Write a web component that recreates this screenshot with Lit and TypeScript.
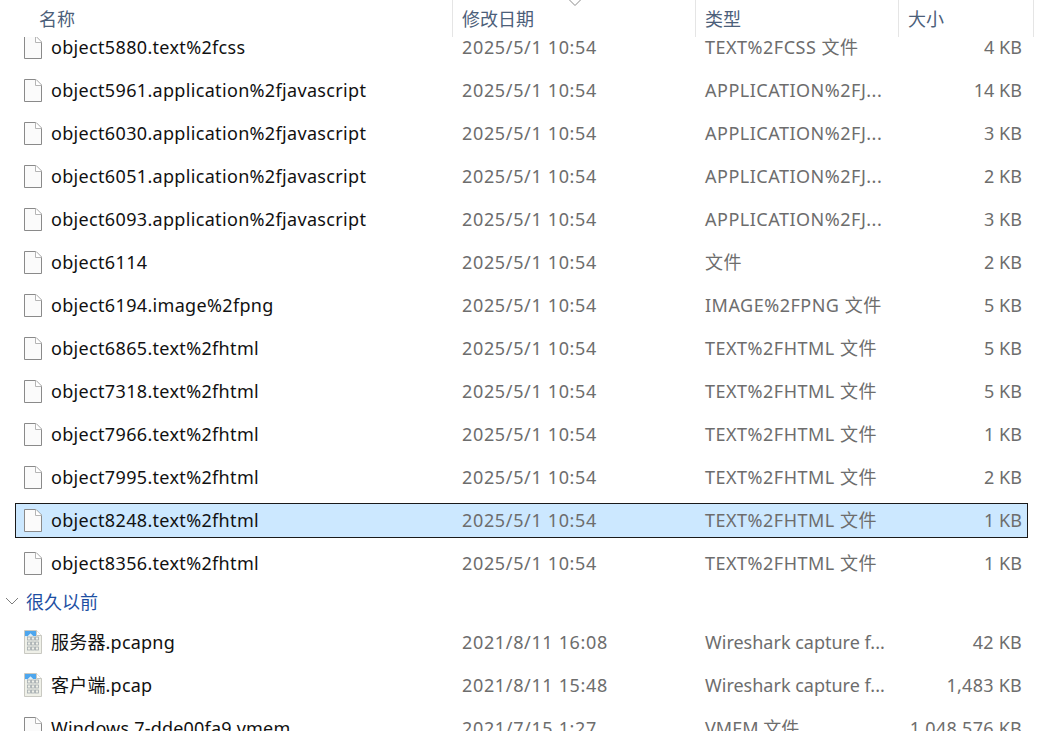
import { LitElement, html, css, svg } from "lit";
import { customElement } from "lit/decorators.js";

type Row = { name: string; date: string; type: string; size: string; kind?: "file" | "pcap"; sel?: boolean; old?: boolean };
const D = "2025/5/1 10:54";
const H = "TEXT%2FHTML 文件";
const A = "APPLICATION%2FJ...";
const W = "Wireshark capture f...";
const recent: Row[] = [
  { name: "object5880.text%2fcss", date: D, type: "TEXT%2FCSS 文件", size: "4 KB" },
  { name: "object5961.application%2fjavascript", date: D, type: A, size: "14 KB" },
  { name: "object6030.application%2fjavascript", date: D, type: A, size: "3 KB" },
  { name: "object6051.application%2fjavascript", date: D, type: A, size: "2 KB" },
  { name: "object6093.application%2fjavascript", date: D, type: A, size: "3 KB" },
  { name: "object6114", date: D, type: "文件", size: "2 KB" },
  { name: "object6194.image%2fpng", date: D, type: "IMAGE%2FPNG 文件", size: "5 KB" },
  { name: "object6865.text%2fhtml", date: D, type: H, size: "5 KB" },
  { name: "object7318.text%2fhtml", date: D, type: H, size: "5 KB" },
  { name: "object7966.text%2fhtml", date: D, type: H, size: "1 KB" },
  { name: "object7995.text%2fhtml", date: D, type: H, size: "2 KB" },
  { name: "object8248.text%2fhtml", date: D, type: H, size: "1 KB", sel: true },
  { name: "object8356.text%2fhtml", date: D, type: H, size: "1 KB" },
];
const old: Row[] = [
  { name: "服务器.pcapng", date: "2021/8/11 16:08", type: W, size: "42 KB", kind: "pcap", old: true },
  { name: "客户端.pcap", date: "2021/8/11 15:48", type: W, size: "1,483 KB", kind: "pcap", old: true },
  { name: "Windows 7-dde00fa9.vmem", date: "2021/7/15 1:27", type: "VMEM 文件", size: "1,048,576 KB", old: true },
];

const fileIcon = svg`<svg class="ic" width="18" height="23" viewBox="0 0 18 23">
  <path d="M.5.5H12L17.5 6V22.5H.5Z" fill="#fbfbfb" stroke="#8a8a8a"/>
  <path d="M11.5.5V6.5H17.5" fill="#fff" stroke="#b5b5b5"/>
</svg>`;

const digits = [3, 8, 13].flatMap((y) =>
  [3.5, 7.5, 11.5].map((x) => svg`<rect x=${x} y=${y + 4} width="3" height="3" fill="none" stroke="#a3abae" stroke-width=".8"/>`)
);
const pcapIcon = svg`<svg class="ic" width="18" height="24" viewBox="0 0 18 24">
  <path d="M.5.5H12.5L17.5 5.5V23.5H.5Z" fill="#eff0e8" stroke="#c9c9c2"/>
  <path d="M1 1H12V6H9L6.5 3.5 3 7H1Z" fill="#4da6ee"/>
  <path d="M1 7 3 7 6.5 3.5 9 6H1Z" fill="#dcedf9"/>
  <path d="M12.5.5V5.5H17.5" fill="#fff" stroke="#c9c9c2"/>
  ${digits}
</svg>`;

@customElement("app-root")
export class AppRoot extends LitElement {
  static styles = css`
    :host {
      display: flex;
      flex-direction: column;
      width: 1043px;
      height: 731px;
      overflow: hidden;
      background: #fff;
      font-family: "Noto Sans", "Noto Sans CJK SC", sans-serif;
      font-size: 18px;
      position: relative;
    }
    .head {
      flex: 0 0 37px;
      display: grid;
      grid-template-columns: 453px 243px 203px 135px;
      position: relative;
      color: #4c607a;
    }
    .hc {
      border-right: 1px solid #e5e5e5;
      padding: 7px 0 0 9px;
      line-height: 24px;
      white-space: nowrap;
      box-sizing: border-box;
    }
    .hc:first-child { padding-left: 39px; }
    .sort { position: absolute; left: 569px; top: 0; }
    .body { flex: 1; overflow: hidden; }
    .list { margin-top: -7px; }
    .row {
      box-sizing: border-box;
      height: 34px;
      margin: 0 15px 9px;
      width: 1013px;
      border: 1px solid transparent;
      display: grid;
      grid-template-columns: 446px 243px 193px 1fr;
      align-items: center;
      color: #6d6d6d;
      white-space: nowrap;
      line-height: 32px;
    }
    .row.sel { background: #cce8ff; border-color: #1a1a1a; height: 35px; padding-bottom: 1px; margin-bottom: 8px; }
    .name { display: flex; align-items: center; gap: 9px; color: #111; letter-spacing: .33px; }
    .old .name { letter-spacing: .2px; }
    .ic { margin-left: 8px; flex: none; }
    .date { letter-spacing: .65px; }
    .type { letter-spacing: .5px; }
    .old .type { letter-spacing: 0; }
    .size { text-align: right; padding-right: 5px; letter-spacing: .05px; }
    .old .size { letter-spacing: .25px; }
    .group {
      display: flex;
      align-items: center;
      height: 30px;
      margin: -3px 0 9px 5px;
      color: #1e4fa3;
    }
    .chev { margin-right: 7px; }
  `;

  private row(r: Row) {
    return html`<div class="row ${r.sel ? "sel" : ""} ${r.old ? "old" : ""}">
      <div class="name">${r.kind === "pcap" ? pcapIcon : fileIcon}<span>${r.name}</span></div>
      <div class="date">${r.date}</div>
      <div class="type">${r.type}</div>
      <div class="size">${r.size}</div>
    </div>`;
  }

  render() {
    return html`
      <div class="head">
        <div class="hc">名称</div>
        <div class="hc">修改日期</div>
        <div class="hc">类型</div>
        <div class="hc">大小</div>
        <svg class="sort" width="12" height="6" viewBox="0 0 12 6"><path d="M.5 0 6 5.5 11.5 0" fill="none" stroke="#8a8a8a"/></svg>
      </div>
      <div class="body">
        <div class="list">
          ${recent.map((r) => this.row(r))}
          <div class="group">
            <svg class="chev" width="14" height="8" viewBox="0 0 14 8"><path d="M1 1 7 7 13 1" fill="none" stroke="#7d7d7d"/></svg>
            很久以前
          </div>
          ${old.map((r) => this.row(r))}
        </div>
      </div>
    `;
  }
}
